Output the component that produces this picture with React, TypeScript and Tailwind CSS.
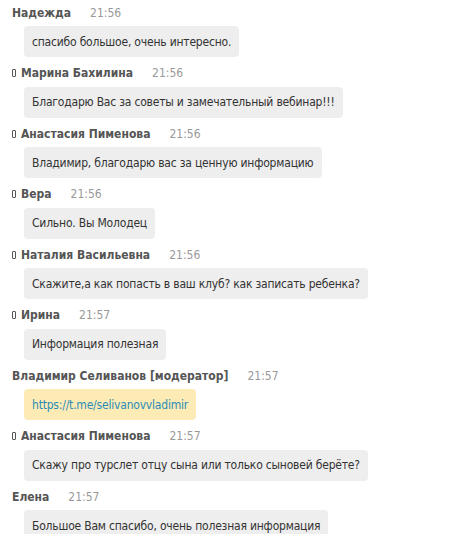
import React from "react";

type Msg = { name: string; time: string; text: string; icon?: boolean; mod?: boolean };

const msgs: Msg[] = [
  { name: "Надежда", time: "21:56", text: "спасибо большое, очень интересно." },
  { name: "Марина Бахилина", time: "21:56", text: "Благодарю Вас за советы и замечательный вебинар!!!", icon: true },
  { name: "Анастасия Пименова", time: "21:56", text: "Владимир, благодарю вас за ценную информацию", icon: true },
  { name: "Вера", time: "21:56", text: "Сильно. Вы Молодец", icon: true },
  { name: "Наталия Васильевна", time: "21:56", text: "Скажите,а как попасть в ваш клуб? как записать ребенка?", icon: true },
  { name: "Ирина", time: "21:57", text: "Информация полезная", icon: true },
  { name: "Владимир Селиванов [модератор]", time: "21:57", text: "https://t.me/selivanovvladimir", mod: true },
  { name: "Анастасия Пименова", time: "21:57", text: "Скажу про турслет отцу сына или только сыновей берёте?", icon: true },
  { name: "Елена", time: "21:57", text: "Большое Вам спасибо, очень полезная информация" },
];

export default function App() {
  return (
    <div
      className="w-[474px] h-[534px] overflow-hidden bg-white text-[12px]"
      style={{ fontFamily: '"DejaVu Sans Condensed", "DejaVu Sans", sans-serif' }}
    >
      <div className="flex flex-col pt-[2px] pl-[12px]">
        {msgs.map((m, i) => (
          <div key={i} className="flex flex-col items-start mb-[5.5px]">
            <div className="flex items-center h-[21px]">
              {m.icon && (
                <span className="inline-block w-[4px] h-[8px] border border-[#555] rounded-[1px] mr-[5px]" />
              )}
              <span className="font-bold text-[#555]">{m.name}</span>
              <span className="ml-[19px] text-[#999]">{m.time}</span>
            </div>
            <div
              className={
                "mt-[3px] ml-[12px] h-[31px] flex items-center px-[8px] rounded-[4px] tracking-[-0.2px] " +
                (m.mod ? "bg-[#fdebb5] text-[#2a8bb8]" : "bg-[#eeeeee] text-[#333]")
              }
            >
              {m.text}
            </div>
          </div>
        ))}
      </div>
    </div>
  );
}
